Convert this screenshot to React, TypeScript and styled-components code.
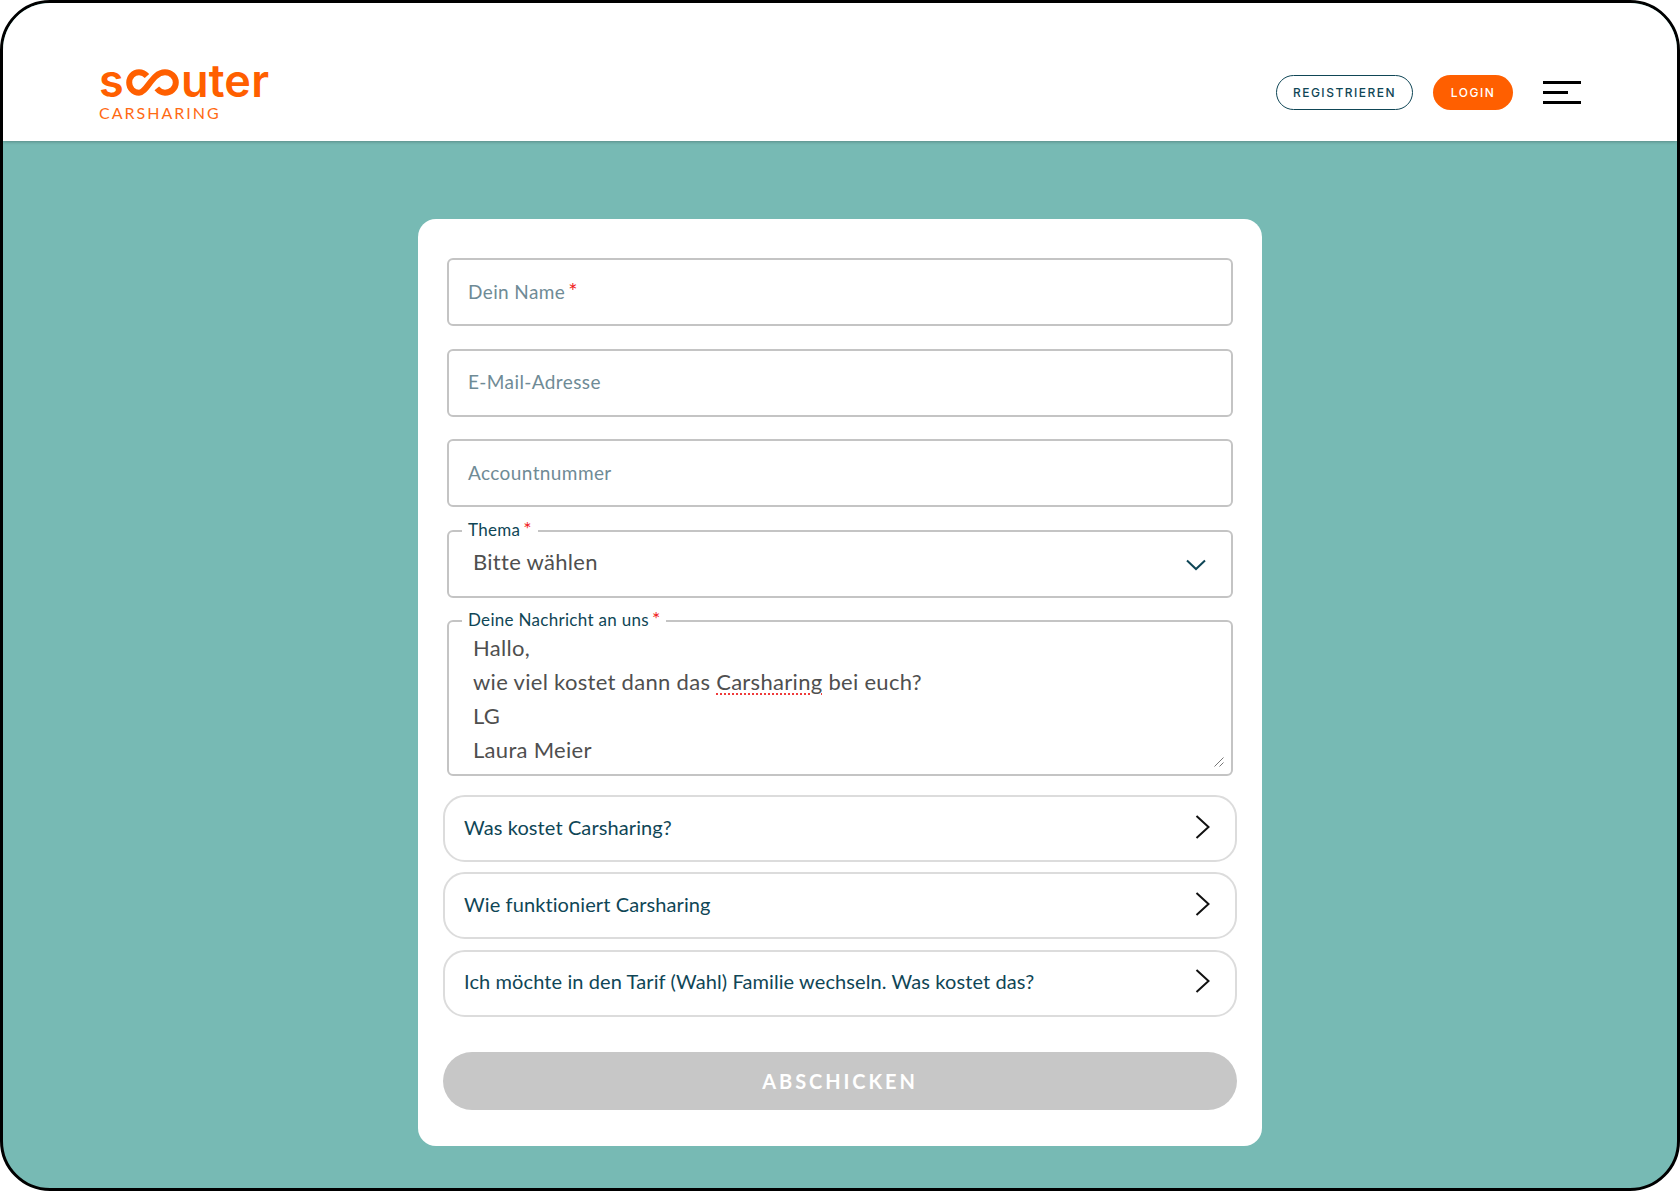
import React from 'react';
import styled, { createGlobalStyle } from 'styled-components';

const GlobalStyle = createGlobalStyle`
  html, body {
    margin: 0;
    padding: 0;
    background: #fff;
  }
  * {
    box-sizing: border-box;
  }
`;

const FONT = `Lato, "Noto Sans", sans-serif`;

const faqItems = [
  'Was kostet Carsharing?',
  'Wie funktioniert Carsharing',
  'Ich möchte in den Tarif (Wahl) Familie wechseln. Was kostet das?',
];

const Chevron = () => (
  <svg width="20" height="28" viewBox="0 0 20 28" fill="none">
    <path d="M3.5 3 L15.5 14 L3.5 25" stroke="#111" strokeWidth="2" />
  </svg>
);

const App = () => {
  return (
    <>
      <GlobalStyle />
      <Frame>
        <Header>
          <Logo>
            <LogoWord>
              <span>s</span>
              <svg width="53" height="27" viewBox="0 0 53 27" fill="none">
                <path
                  d="M21 7 C18.8 4.6 16 3.3 13 3.3 C7.5 3.3 3.2 7.8 3.2 13.5 C3.2 19.2 7.5 23.7 13 23.7 C21 23.7 26 3.3 39 3.3 C45 3.3 49.8 7.8 49.8 13.5 C49.8 19.2 45 23.7 39 23.7 C35.6 23.7 33 22 30.8 19.4"
                  stroke="#ff5f00"
                  strokeWidth="6"
                />
              </svg>
              <span>uter</span>
            </LogoWord>
            <LogoSub>CARSHARING</LogoSub>
          </Logo>
          <Nav>
            <OutlineButton>REGISTRIEREN</OutlineButton>
            <LoginButton>LOGIN</LoginButton>
            <Burger>
              <BurgerLine $width={38} />
              <BurgerLine $width={25} />
              <BurgerLine $width={38} />
            </Burger>
          </Nav>
        </Header>
        <Main>
          <Card>
            <Fields>
              <InputBox>
                <Placeholder>
                  Dein Name<Star>*</Star>
                </Placeholder>
              </InputBox>
              <InputBox>
                <Placeholder>E-Mail-Adresse</Placeholder>
              </InputBox>
              <InputBox>
                <Placeholder>Accountnummer</Placeholder>
              </InputBox>
              <SelectBox>
                <Legend>
                  Thema<Star>*</Star>
                </Legend>
                <SelectValue>Bitte wählen</SelectValue>
                <svg width="20" height="12" viewBox="0 0 20 12" fill="none">
                  <path d="M1 1.5 L10 10 L19 1.5" stroke="#0f4656" strokeWidth="2" />
                </svg>
              </SelectBox>
              <MessageBox>
                <Legend>
                  Deine Nachricht an uns<Star>*</Star>
                </Legend>
                <MessageLine>Hallo,</MessageLine>
                <MessageLine>
                  wie viel kostet dann das <Misspelled>Carsharing</Misspelled> bei euch?
                </MessageLine>
                <MessageLine>LG</MessageLine>
                <MessageLine>Laura Meier</MessageLine>
                <ResizeGrip width="10" height="10" viewBox="0 0 10 10" fill="none">
                  <path d="M0.5 9.5 L9.5 0.5 M5.5 9.5 L9.5 5.5" stroke="#777" strokeWidth="1" />
                </ResizeGrip>
              </MessageBox>
            </Fields>
            <FaqList>
              {faqItems.map((item) => (
                <FaqRow key={item}>
                  <span>{item}</span>
                  <Chevron />
                </FaqRow>
              ))}
            </FaqList>
            <SubmitButton>ABSCHICKEN</SubmitButton>
          </Card>
        </Main>
      </Frame>
    </>
  );
};

export default App;

const Frame = styled.div`
  width: 1680px;
  height: 1191px;
  border: 3px solid #000;
  border-radius: 50px;
  overflow: hidden;
  display: flex;
  flex-direction: column;
  background: #77bab4;
  font-family: ${FONT};
`;

const Header = styled.header`
  height: 138px;
  flex-shrink: 0;
  background: #fff;
  box-shadow: 0 1px 3px rgba(0, 0, 0, 0.25);
  display: flex;
  align-items: center;
  justify-content: space-between;
  padding: 40px 96px 0 96px;
`;

const Logo = styled.div`
  display: flex;
  flex-direction: column;
  gap: 5px;
`;

const LogoWord = styled.div`
  display: flex;
  align-items: flex-end;
  gap: 2px;
  height: 36px;
  color: #ff5f00;
  font-family: Inter, sans-serif;
  font-size: 45px;
  line-height: 36px;
  font-weight: 600;
  letter-spacing: 0.2px;

  svg {
    margin-bottom: 3px;
  }
`;

const LogoSub = styled.div`
  color: #ff6a13;
  font-size: 16px;
  line-height: 18px;
  letter-spacing: 2px;
`;

const Nav = styled.nav`
  display: flex;
  align-items: center;
  margin-top: 1px;
`;

const OutlineButton = styled.button`
  width: 137px;
  height: 35px;
  padding: 0;
  border: 1.5px solid #0f4656;
  border-radius: 18px;
  background: #fff;
  color: #0f4656;
  font-family: Inter, sans-serif;
  font-size: 12px;
  font-weight: 500;
  letter-spacing: 1.5px;
`;

const LoginButton = styled.button`
  width: 80px;
  height: 35px;
  margin-left: 20px;
  padding: 0;
  border: 0;
  border-radius: 18px;
  background: #ff5f00;
  color: #fff;
  font-family: Inter, sans-serif;
  font-size: 12px;
  font-weight: 500;
  letter-spacing: 1.5px;
`;

const Burger = styled.div`
  width: 38px;
  height: 23px;
  margin-left: 30px;
  display: flex;
  flex-direction: column;
  justify-content: space-between;
`;

const BurgerLine = styled.div<{ $width: number }>`
  width: ${({ $width }) => $width}px;
  height: 3px;
  background: #000;
`;

const Main = styled.main`
  flex: 1;
  display: flex;
  justify-content: center;
  padding-top: 78px;
`;

const Card = styled.div`
  width: 844px;
  height: 927px;
  padding: 39px 25px 0;
  border-radius: 18px;
  background: #fff;
`;

const Fields = styled.div`
  display: flex;
  flex-direction: column;
  gap: 22.5px;
  padding: 0 4px;
`;

const InputBox = styled.div`
  height: 68px;
  padding: 0 19px 2px;
  display: flex;
  align-items: center;
  border: 2px solid #c4c4c4;
  border-radius: 6px;
`;

const Placeholder = styled.span`
  color: #6f8b96;
  font-size: 19px;
  letter-spacing: 0.4px;
`;

const Star = styled.span`
  margin-left: 3px;
  color: #f01c1c;
  font-size: 1.15em;
  line-height: 1;
`;

const Legend = styled.span`
  position: absolute;
  top: -13px;
  left: 13px;
  padding: 0 6px;
  background: #fff;
  color: #0f4656;
  font-size: 17px;
  line-height: 20px;
  letter-spacing: 0.3px;
`;

const SelectBox = styled.div`
  position: relative;
  height: 68px;
  padding: 0 25px 4px 24px;
  display: flex;
  align-items: center;
  justify-content: space-between;
  border: 2px solid #c4c4c4;
  border-radius: 6px;

  svg {
    margin-top: 6px;
  }
`;

const SelectValue = styled.span`
  color: #4f4f4f;
  font-size: 22px;
  letter-spacing: 0.3px;
`;

const MessageBox = styled.div`
  position: relative;
  height: 156px;
  padding: 9px 24px 0;
  border: 2px solid #c4c4c4;
  border-radius: 6px;
`;

const MessageLine = styled.div`
  color: #4f4f4f;
  font-size: 22px;
  line-height: 34px;
  letter-spacing: 0.3px;
`;

const Misspelled = styled.span`
  text-decoration: underline dotted #ef3b3b;
  text-underline-offset: 3px;
`;

const ResizeGrip = styled.svg`
  position: absolute;
  right: 7px;
  bottom: 7px;
`;

const FaqList = styled.div`
  display: flex;
  flex-direction: column;
  gap: 10.4px;
  margin-top: 19px;
`;

const FaqRow = styled.div`
  height: 67px;
  padding: 0 22px 4px 19px;
  display: flex;
  align-items: center;
  justify-content: space-between;
  border: 2px solid #dcdcdc;
  border-radius: 22px;
  color: #0f4656;
  font-size: 20px;
  letter-spacing: 0.1px;
`;

const SubmitButton = styled.button`
  display: block;
  width: 100%;
  height: 58px;
  margin-top: 35px;
  padding: 0;
  border: 0;
  border-radius: 29px;
  background: #c7c7c7;
  color: #fff;
  font-family: ${FONT};
  font-size: 20px;
  font-weight: 700;
  letter-spacing: 2.9px;
`;
